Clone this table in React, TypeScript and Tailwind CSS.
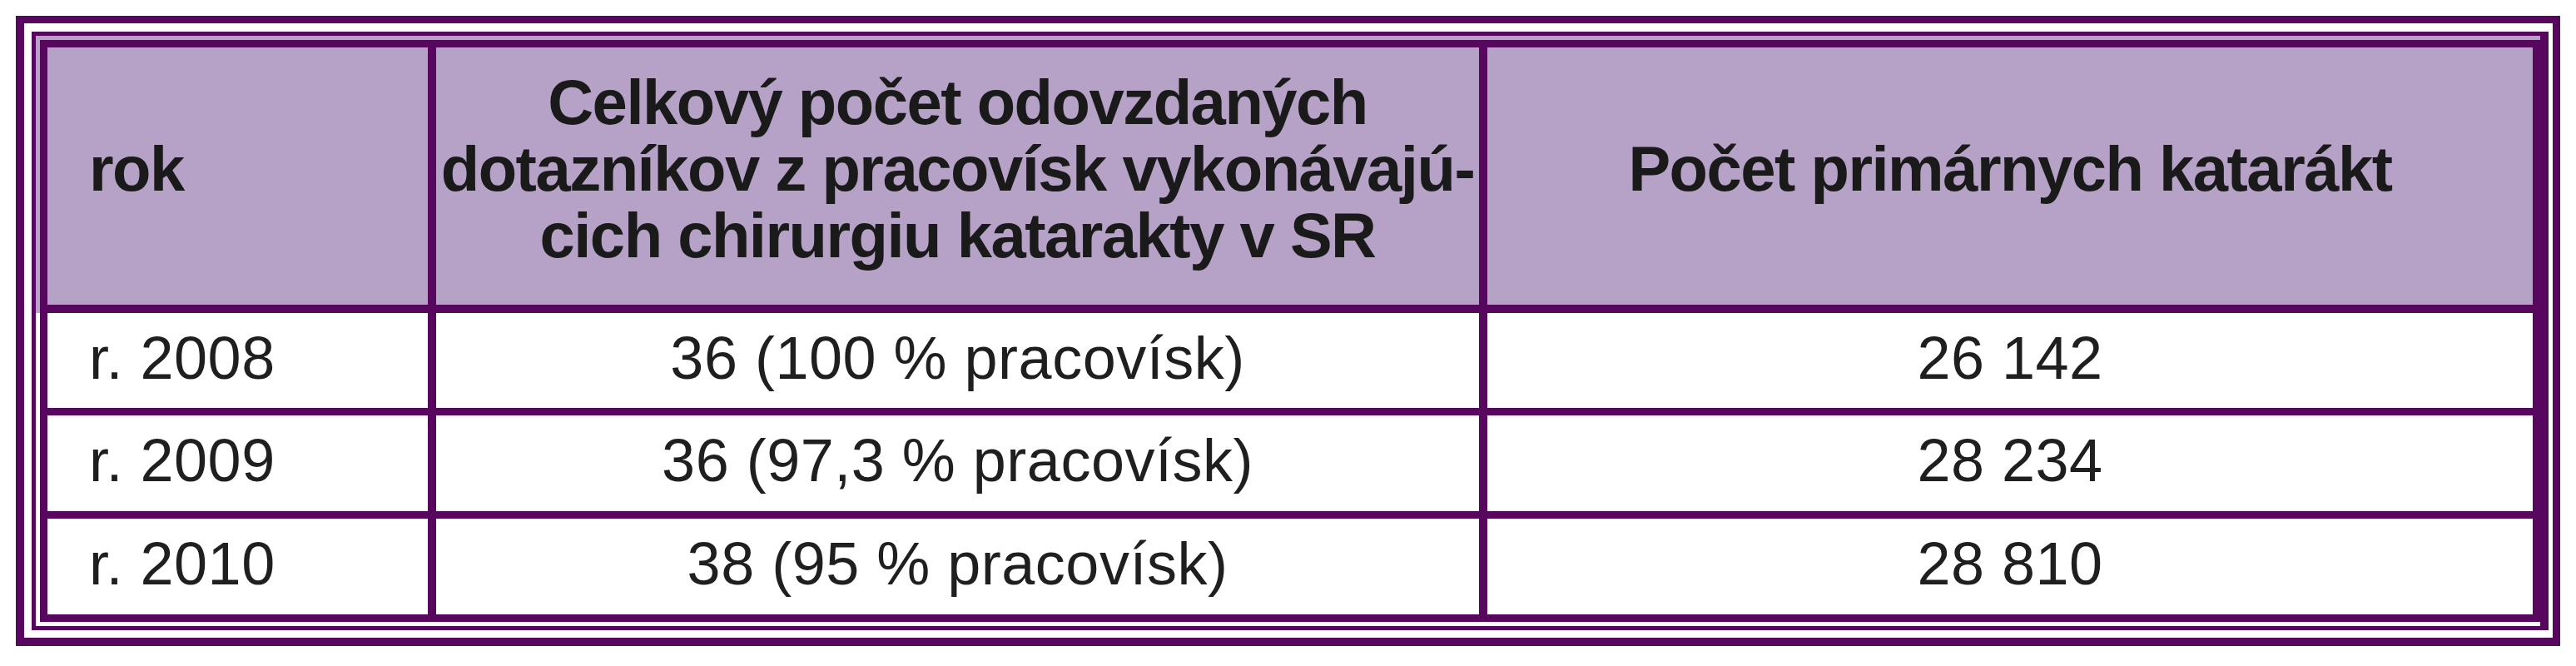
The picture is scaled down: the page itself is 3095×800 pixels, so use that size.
const rows = [
  { year: "r. 2008", count: "36 (100 % pracovísk)", total: "26 142" },
  { year: "r. 2009", count: "36 (97,3 % pracovísk)", total: "28 234" },
  { year: "r. 2010", count: "38 (95 % pracovísk)", total: "28 810" },
];

export default function App() {
  return (
    <div className="w-[3095px] h-[800px] bg-white pt-[19px] pl-[19px] font-['Liberation_Sans',Arial,sans-serif]">
      {/* outer frame */}
      <div className="flex w-[3057px] h-[757px] bg-white border-[#57075e] border-t-[9px] border-l-[10px] border-r-[9px] border-b-[10px] pt-[10px] pl-[9px] pr-[5px] pb-[9px]">
        {/* table frame */}
        <div className="flex flex-1 flex-col border-[#57075e] border-t-[5px] border-l-[5px] border-r-[10px] border-b-[5px]">
          {/* header */}
          <div className="bg-[#b5a2c6] pt-[5px] pl-[5px]">
            <div className="grid grid-cols-[467px_1263px_1fr] h-[328px] border-[#57075e] border-t-[9px] border-l-[9px] border-r-[9px] border-b-[10px] text-[76px] leading-[80px] font-bold tracking-[-1.5px] text-[#1a1a1a]">
              <div className="flex items-center pl-[50px] pb-[18px] border-r-[10px] border-[#57075e]">
                rok
              </div>
              <div className="flex flex-col items-center justify-center pb-[18px] border-r-[10px] border-[#57075e] whitespace-nowrap text-center">
                <span>Celkový počet odovzdaných</span>
                <span>dotazníkov z pracovísk vykonávajú-</span>
                <span>cich chirurgiu katarakty v SR</span>
              </div>
              <div className="flex items-center justify-center pb-[18px] whitespace-nowrap">
                Počet primárnych katarákt
              </div>
            </div>
          </div>

          {/* body rows */}
          {rows.map((row, idx) => (
            <div
              key={row.year}
              className={idx === rows.length - 1 ? "bg-white pl-[5px] pb-[5px]" : "bg-white pl-[5px]"}
            >
              <div
                className={
                  idx === 0
                    ? "grid grid-cols-[467px_1263px_1fr] h-[123px] border-[#57075e] border-l-[9px] border-r-[9px] border-b-[9px] text-[72px] tracking-[0.5px] text-[#1f1f1f]"
                    : "grid grid-cols-[467px_1263px_1fr] h-[124px] border-[#57075e] border-l-[9px] border-r-[9px] border-b-[9px] text-[72px] tracking-[0.5px] text-[#1f1f1f]"
                }
              >
                <div className="flex items-center pl-[50px] pb-[10px] border-r-[10px] border-[#57075e]">
                  {row.year}
                </div>
                <div className="flex items-center justify-center pb-[10px] border-r-[10px] border-[#57075e] whitespace-nowrap">
                  {row.count}
                </div>
                <div className="flex items-center justify-center pb-[10px] whitespace-nowrap">
                  {row.total}
                </div>
              </div>
            </div>
          ))}
        </div>
      </div>
    </div>
  );
}
